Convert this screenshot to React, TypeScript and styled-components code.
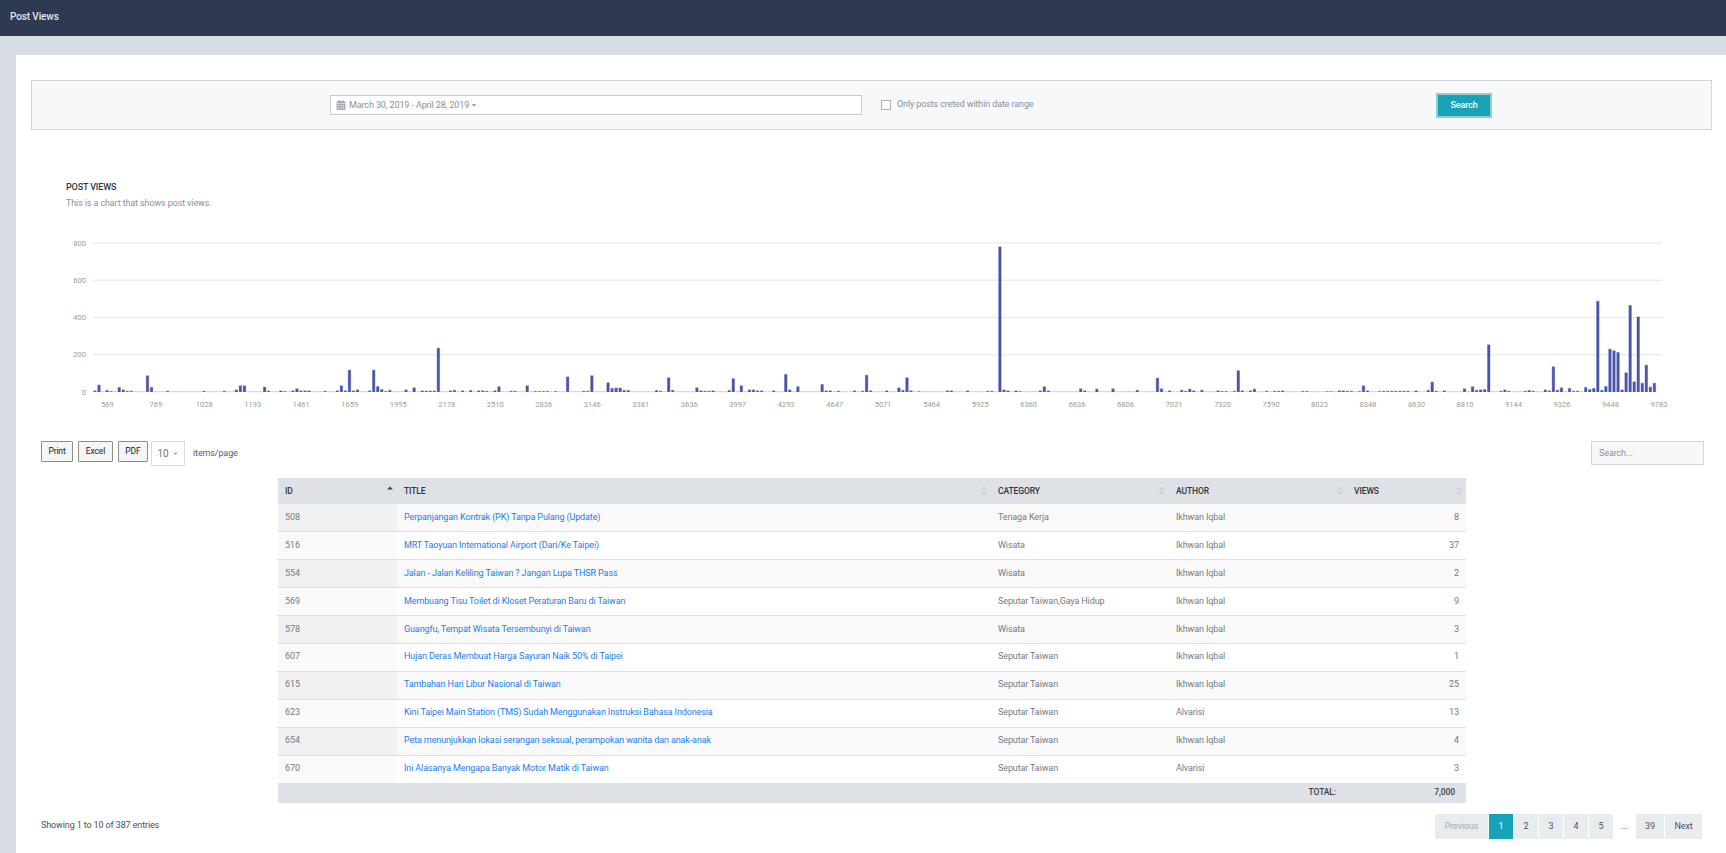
import React from "react";
import styled, { createGlobalStyle } from "styled-components";
import { FaCalendarAlt, FaCaretDown } from "react-icons/fa";

const Global = createGlobalStyle`
  html, body { margin: 0; padding: 0; background: #d8dce3; }
  body { font-family: Roboto, "Liberation Sans", sans-serif; font-size: 9px; letter-spacing: -0.12px; color: #737b85; }
  * { box-sizing: border-box; }
`;

const Page = styled.div`
  width: 1726px;
  height: 853px;
  overflow: hidden;
  display: flex;
  flex-direction: column;
`;
const TopBar = styled.header`
  height: 36px;
  flex: none;
  background: #2d3a52;
  color: #e4e7ec;
  font-size: 10px;
  font-weight: 500;
  line-height: 34px;
  padding-left: 10px;
`;
const Card = styled.main`
  flex: 1;
  margin: 19px 0 0 16px;
  background: #fff;
  padding-top: 25px;
  display: flex;
  flex-direction: column;
`;
const FilterBox = styled.section`
  margin: 0 14px 0 15px;
  height: 50px;
  flex: none;
  background: #f7f8fa;
  border: 1px solid #d2d4d8;
  display: flex;
  align-items: center;
  padding-left: 298px;
`;
const DateInput = styled.div`
  width: 532px;
  height: 20px;
  margin-top: -1px;
  background: #fff;
  border: 1px solid #c8cace;
  display: flex;
  align-items: center;
  gap: 3px;
  padding-left: 5px;
  color: #8a909a;
  svg { color: #a2a6ac; flex: none; }
`;
const DateCaret = styled(FaCaretDown)`
  margin-left: -2px;
`;
const CheckLabel = styled.label`
  display: flex;
  align-items: center;
  margin-left: 19px;
  gap: 6px;
  width: 555px;
  color: #8a909a;
  margin-top: -2px;
`;
const CheckBox = styled.span`
  width: 10px;
  height: 10px;
  margin-top: 2px;
  background: #fff;
  border: 1px solid #aeb2b8;
  flex: none;
`;
const SearchButton = styled.button`
  width: 56px;
  height: 25px;
  background: #17a2b8;
  color: #fff;
  border: 2px solid #8bd0da;
  font: 500 9px Roboto, sans-serif;
  letter-spacing: -0.12px;
  padding: 0;
`;
const Heading = styled.div`
  margin: 49px 0 0 50px;
  height: 56px;
  flex: none;
`;
const HeadingTitle = styled.h2`
  margin: 0;
  font-size: 9px;
  font-weight: 500;
  letter-spacing: -0.15px;
  line-height: 16px;
  color: #2b3648;
`;
const HeadingSub = styled.p`
  margin: 0;
  line-height: 16px;
  color: #8a909a;
`;
const ChartSvg = styled.svg`
  display: block;
  flex: none;
  margin-left: 50px;
`;
const Toolbar = styled.div`
  margin-top: 26px;
  height: 25px;
  flex: none;
  display: flex;
  align-items: flex-start;
  padding: 0 22px 0 25px;
`;
const ExportButton = styled.button<{ $w: number }>`
  width: ${(p) => p.$w}px;
  height: 21px;
  margin-right: 5px;
  padding: 0 0 2px;
  background: #f5f5f5;
  border: 1px solid #8d8d8d;
  border-radius: 1px;
  color: #222;
  font: 8.5px Roboto, sans-serif;
  letter-spacing: -0.12px;
`;
const PageSize = styled.div`
  width: 34px;
  height: 25px;
  margin-left: -2px;
  border: 1px solid #d9dbde;
  display: flex;
  align-items: center;
  justify-content: center;
  gap: 3px;
  color: #6f7680;
  font-size: 10px;
  svg { color: #9a9ea4; }
`;
const ItemsLabel = styled.span`
  margin-left: 8px;
  line-height: 24px;
  color: #555c66;
`;
const TableSearch = styled.div`
  margin-left: auto;
  width: 113px;
  height: 24px;
  background: #f7f8fa;
  border: 1px solid #d2d4d8;
  color: #8a909a;
  line-height: 22px;
  padding-left: 7px;
`;
const Table = styled.table`
  margin: 12px 0 0 262px;
  width: 1188px;
  flex: none;
  table-layout: fixed;
  border-collapse: collapse;
`;
const HeadCell = styled.th`
  position: relative;
  height: 26px;
  padding: 0 7px 1px;
  background: #dee1e5;
  color: #2f3640;
  font-size: 8.5px;
  font-weight: 500;
  letter-spacing: -0.1px;
  text-align: left;
`;
const SortMark = styled.svg`
  position: absolute;
  right: 4px;
  top: 8px;
`;
const Row = styled.tr<{ $odd: boolean }>`
  height: 27.9px;
  background: ${(p) => (p.$odd ? "#f9f9f9" : "#fff")};
  &:not(:last-child) td { border-bottom: 1px solid #dddfe2; }
`;
const Cell = styled.td<{ $right?: boolean }>`
  padding: 0 7px 2px;
  color: #737b85;
  text-align: ${(p) => (p.$right ? "right" : "left")};
`;
const IdCell = styled(Cell)<{ $odd: boolean }>`
  background: ${(p) => (p.$odd ? "#f1f1f1" : "#fafafa")};
`;
const TitleLink = styled.a`
  color: #1a7df0;
  text-decoration: none;
`;
const TotalCell = styled.td<{ $right?: boolean }>`
  height: 20px;
  padding: 0 11px 1px 7px;
  background: #dee1e5;
  color: #3a4049;
  font-size: 8.5px;
  font-weight: 500;
  letter-spacing: -0.1px;
  text-align: ${(p) => (p.$right ? "right" : "left")};
`;
const Footer = styled.div`
  margin-top: 11px;
  display: flex;
  justify-content: space-between;
  align-items: flex-start;
  padding: 0 24px 0 25px;
`;
const Showing = styled.div`
  line-height: 22px;
  color: #4a505a;
`;
const Pager = styled.nav`
  display: flex;
  gap: 1px;
`;
const PageItem = styled.span<{ $w: number; $active?: boolean; $muted?: boolean; $plain?: boolean }>`
  width: ${(p) => p.$w}px;
  height: 25px;
  line-height: 24px;
  text-align: center;
  background: ${(p) => (p.$active ? "#17a2b8" : p.$plain ? "transparent" : "#e9ecef")};
  color: ${(p) => (p.$active ? "#fff" : p.$muted ? "#a6abb2" : "#4c535d")};
`;

const values: Record<number, number> = {
  0:7,1:38,3:9,4:4,6:25,7:12,8:5,9:5,13:88,14:25,18:5,27:5,32:5,35:12,36:34,37:34,42:27,43:6,46:7,47:4,49:7,50:18,51:7,52:7,53:7,57:5,60:7,61:34,62:7,63:118,64:7,65:12,68:7,69:118,70:30,71:14,72:4,73:10,77:12,79:23,81:7,82:6,83:6,84:6,85:236,88:7,89:10,91:7,93:9,95:7,96:7,97:5,99:7,100:29,103:5,104:5,107:34,109:4,110:4,111:4,112:4,114:4,117:82,121:5,122:5,123:88,127:50,128:20,129:22,130:22,131:9,132:9,139:9,140:5,142:77,143:10,149:23,150:7,151:5,152:5,153:7,157:9,158:72,160:34,162:12,163:12,164:7,165:7,168:7,171:95,172:12,174:29,180:41,181:7,182:7,184:5,188:7,190:5,191:91,192:7,196:7,199:23,200:10,201:77,202:7,204:3,211:7,212:7,216:7,221:5,222:5,224:780,225:12,226:7,228:7,229:4,234:7,235:29,236:7,244:18,245:7,248:16,252:18,258:10,263:75,264:18,266:7,269:10,270:5,271:16,272:7,274:10,278:7,279:4,280:4,282:5,283:115,284:7,286:7,287:16,290:5,292:5,293:5,294:7,299:4,300:4,305:3,306:3,308:7,309:7,310:5,311:5,313:4,314:34,315:7,318:4,319:5,320:5,321:5,322:5,323:5,324:5,325:5,327:7,330:10,331:54,332:5,334:7,339:18,341:29,342:10,343:12,344:14,345:254,348:5,349:12,350:5,354:5,355:9,356:5,359:12,360:7,361:136,362:10,363:23,365:20,366:5,367:5,369:25,370:14,371:20,372:488,373:10,374:30,375:231,376:222,377:213,378:12,379:104,380:465,381:55,382:404,383:48,384:145,385:27,386:48,
};
const bars = Array.from({ length: 387 }, (_, i) => values[i] ?? 1.6);
const xLabels = ["569","769","1028","1193","1461","1659","1995","2178","2510","2836","3146","3381","3636","3997","4293","4647","5071","5464","5925","6360","6636","6806","7021","7320","7590","8023","8348","8630","8810","9144","9326","9448","9783"];
const BASE = 392;
const SCALE = 149 / 800;

const Chart = () => (
  <ChartSvg width={1620} height={180} viewBox="66 235 1620 180" role="img">
    {[0, 200, 400, 600, 800].map((v) => (
      <g key={v}>
        {v > 0 && <rect x={93} y={BASE - v * SCALE - 0.7} width={1569} height={1.2} fill="#e8e8ea" />}
        <text x={86} y={BASE - v * SCALE + 2.6} textAnchor="end" fontSize={7.5} letterSpacing={0} fill="#9a9a9a" fontFamily="Roboto">{v}</text>
      </g>
    ))}
    {bars.map((v, i) => (
      <g key={i}>
        <rect x={93.4 + i * 4.04 - 0.2} y={BASE - v * SCALE - 0.4} width={3.5} height={v * SCALE + 0.4} fill="#b9bde2" />
        <rect x={93.4 + i * 4.04 + 0.3} y={BASE - v * SCALE + (v > 2 ? 0.2 : 0.3)} width={2.5} height={Math.max(0, v * SCALE - 0.2)} fill="#4a54ab" />
      </g>
    ))}
    {xLabels.map((l, i) => (
      <text key={l} x={107.3 + i * 48.49} y={406.5} textAnchor="middle" fontSize={7.5} letterSpacing={0} fill="#9a9a9a" fontFamily="Roboto">{l}</text>
    ))}
  </ChartSvg>
);

const Sort = ({ active }: { active?: boolean }) => (
  <SortMark width="6" height="9" viewBox="0 0 6 9">
    <path d="M3 0.5 6 3.5H0Z" fill={active ? "#3d4450" : "#cdd0d5"} />
    <path d="M0 5.5H6L3 8.5Z" fill={active ? "#dee1e5" : "#cdd0d5"} />
  </SortMark>
);

const rows = [
  ["508", "Perpanjangan Kontrak (PK) Tanpa Pulang (Update)", "Tenaga Kerja", "Ikhwan Iqbal", "8"],
  ["516", "MRT Taoyuan International Airport (Dari/Ke Taipei)", "Wisata", "Ikhwan Iqbal", "37"],
  ["554", "Jalan - Jalan Keliling Taiwan ? Jangan Lupa THSR Pass", "Wisata", "Ikhwan Iqbal", "2"],
  ["569", "Membuang Tisu Toilet di Kloset Peraturan Baru di Taiwan", "Seputar Taiwan,Gaya Hidup", "Ikhwan Iqbal", "9"],
  ["578", "Guangfu, Tempat Wisata Tersembunyi di Taiwan", "Wisata", "Ikhwan Iqbal", "3"],
  ["607", "Hujan Deras Membuat Harga Sayuran Naik 50% di Taipei", "Seputar Taiwan", "Ikhwan Iqbal", "1"],
  ["615", "Tambahan Hari Libur Nasional di Taiwan", "Seputar Taiwan", "Ikhwan Iqbal", "25"],
  ["623", "Kini Taipei Main Station (TMS) Sudah Menggunakan Instruksi Bahasa Indonesia", "Seputar Taiwan", "Alvarisi", "13"],
  ["654", "Peta menunjukkan lokasi serangan seksual, perampokan wanita dan anak-anak", "Seputar Taiwan", "Ikhwan Iqbal", "4"],
  ["670", "Ini Alasanya Mengapa Banyak Motor Matik di Taiwan", "Seputar Taiwan", "Alvarisi", "3"],
];

const pages: { t: string; w: number; active?: boolean; muted?: boolean; plain?: boolean }[] = [
  { t: "Previous", w: 53, muted: true },
  { t: "1", w: 24, active: true },
  { t: "2", w: 24 },
  { t: "3", w: 24 },
  { t: "4", w: 24 },
  { t: "5", w: 24 },
  { t: "...", w: 21, plain: true },
  { t: "39", w: 28 },
  { t: "Next", w: 37 },
];

export default function App() {
  return (
    <Page>
      <Global />
      <TopBar>Post Views</TopBar>
      <Card>
        <FilterBox>
          <DateInput>
            <FaCalendarAlt size={10} />
            March 30, 2019 - April 28, 2019
            <DateCaret size={8} />
          </DateInput>
          <CheckLabel>
            <CheckBox />
            Only posts creted within date range
          </CheckLabel>
          <SearchButton>Search</SearchButton>
        </FilterBox>
        <Heading>
          <HeadingTitle>POST VIEWS</HeadingTitle>
          <HeadingSub>This is a chart that shows post views.</HeadingSub>
        </Heading>
        <Chart />
        <Toolbar>
          <ExportButton $w={32}>Print</ExportButton>
          <ExportButton $w={35}>Excel</ExportButton>
          <ExportButton $w={30}>PDF</ExportButton>
          <PageSize>10<FaCaretDown size={7} /></PageSize>
          <ItemsLabel>items/page</ItemsLabel>
          <TableSearch>Search...</TableSearch>
        </Toolbar>
        <Table>
          <colgroup>
            <col width={119} /><col width={594} /><col width={178} /><col width={178} /><col width={119} />
          </colgroup>
          <thead>
            <tr>
              <HeadCell>ID<Sort active /></HeadCell>
              <HeadCell>TITLE<Sort /></HeadCell>
              <HeadCell>CATEGORY<Sort /></HeadCell>
              <HeadCell>AUTHOR<Sort /></HeadCell>
              <HeadCell>VIEWS<Sort /></HeadCell>
            </tr>
          </thead>
          <tbody>
            {rows.map((r, i) => (
              <Row key={r[0]} $odd={i % 2 === 0}>
                <IdCell $odd={i % 2 === 0}>{r[0]}</IdCell>
                <Cell><TitleLink href="#">{r[1]}</TitleLink></Cell>
                <Cell>{r[2]}</Cell>
                <Cell>{r[3]}</Cell>
                <Cell $right>{r[4]}</Cell>
              </Row>
            ))}
          </tbody>
          <tfoot>
            <tr>
              <TotalCell colSpan={3} />
              <TotalCell $right>TOTAL:</TotalCell>
              <TotalCell $right>7,000</TotalCell>
            </tr>
          </tfoot>
        </Table>
        <Footer>
          <Showing>Showing 1 to 10 of 387 entries</Showing>
          <Pager>
            {pages.map((p) => (
              <PageItem key={p.t} $w={p.w} $active={p.active} $muted={p.muted} $plain={p.plain}>{p.t}</PageItem>
            ))}
          </Pager>
        </Footer>
      </Card>
    </Page>
  );
}
